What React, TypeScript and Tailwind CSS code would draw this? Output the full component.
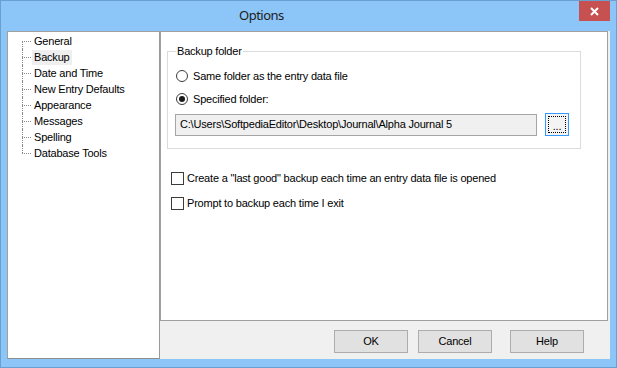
import React from "react";

const font = { fontFamily: '"Liberation Sans", Arial, sans-serif' };

const treeItems = [
  "General",
  "Backup",
  "Date and Time",
  "New Entry Defaults",
  "Appearance",
  "Messages",
  "Spelling",
  "Database Tools",
];

function TreeRow({ label, index, total }: { label: string; index: number; total: number }) {
  const first = index === 0;
  const last = index === total - 1;
  return (
    <div className="flex h-[16px] items-center">
      <div className="relative ml-[14px] h-full w-[9px] shrink-0">
        <div
          className={`absolute left-0 w-0 border-l border-dotted border-[#8a8a8a] ${
            first ? "top-[8px] bottom-0" : last ? "top-0 h-[8px]" : "top-0 bottom-0"
          }`}
        />
        <div className="absolute left-0 top-[8px] h-0 w-[9px] border-t border-dotted border-[#8a8a8a]" />
      </div>
      <span
        className={`ml-[1px] h-[15px] px-[2px] text-[11px] leading-[15px] tracking-[-0.2px] text-black ${
          label === "Backup" ? "bg-[#efefef]" : ""
        }`}
      >
        {label}
      </span>
    </div>
  );
}

function Radio({ checked }: { checked?: boolean }) {
  return (
    <div className="flex h-[12px] w-[12px] shrink-0 items-center justify-center rounded-full border border-[#3c3c3c] bg-white">
      {checked && <div className="h-[6px] w-[6px] rounded-full bg-[#1a1a1a]" />}
    </div>
  );
}

function Check() {
  return <div className="h-[13px] w-[13px] shrink-0 border border-[#3c3c3c] bg-white" />;
}

function Btn({ children, className = "" }: { children: React.ReactNode; className?: string }) {
  return (
    <div
      className={`flex h-[23px] w-[74px] items-center justify-center border border-[#adadad] bg-[#e1e1e1] text-[11px] tracking-[-0.2px] text-black ${className}`}
    >
      {children}
    </div>
  );
}

export default function App() {
  return (
    <div
      className="flex h-[368px] w-[617px] flex-col border border-[#6a9fd2] bg-[#8cc5f7]"
      style={font}
    >
      {/* Title bar */}
      <div className="relative flex h-[30px] shrink-0 items-center pl-[238px]">
        <span
          className="text-[13px] tracking-[-0.5px] text-[#1c1c1c]"
          style={{ fontFamily: '"Noto Sans", "Liberation Sans", sans-serif' }}
        >
          Options
        </span>
        <div className="absolute right-[6px] top-0 flex h-[20px] w-[31px] items-center justify-center bg-[#c75050]">
          <svg width="9" height="9" viewBox="0 0 9 9">
            <path d="M1 1 L8 8 M8 1 L1 8" stroke="white" strokeWidth="2" />
          </svg>
        </div>
      </div>

      {/* Client */}
      <div className="ml-[6px] mr-[6px] flex h-[328px] shrink-0">
        {/* Tree */}
        <div className="h-full w-[153px] shrink-0 border border-[#a0a0a0] border-b-[#8d8d8d] border-r-[#9a9a9a] bg-white pt-[1px]">
          {treeItems.map((t, i) => (
            <TreeRow key={t} label={t} index={i} total={treeItems.length} />
          ))}
        </div>

        {/* Right side */}
        <div className="flex flex-1 flex-col bg-[#f0f0f0]">
          <div className="mr-[2px] flex h-[290px] flex-col border border-[#a0a0a0] bg-white pl-[6px] text-[11px] tracking-[-0.2px] text-black">
            {/* Group box */}
            <div className="relative mt-[19px] flex h-[98px] w-[414px] flex-col border border-[#dcdcdc] pl-[7px]">
              <span className="absolute left-[8px] top-[-8px] bg-white px-[1px] leading-[14px]">
                Backup folder
              </span>
              <div className="mt-[16px] flex h-[16px] items-center gap-[5px] pl-[1px]">
                <Radio />
                <span>Same folder as the entry data file</span>
              </div>
              <div className="mt-[7px] flex h-[16px] items-center gap-[5px] pl-[1px]">
                <Radio checked />
                <span>Specified folder:</span>
              </div>
              <div className="mt-[6px] flex items-center">
                <div className="flex h-[22px] w-[362px] items-center border border-[#a5a5a5] bg-[#f0f0f0] pl-[4px]">
                  C:\Users\SoftpediaEditor\Desktop\Journal\Alpha Journal 5
                </div>
                <div className="ml-[8px] flex h-[23px] w-[24px] items-center justify-center border border-[#3399ff] bg-[#f4f4f4] p-[2px]">
                  <div className="flex h-full w-full items-end justify-center border border-dotted border-black pb-[1px] leading-[10px]">
                    ...
                  </div>
                </div>
              </div>
            </div>

            {/* Checkboxes */}
            <div className="mt-[22px] flex h-[14px] items-center gap-[3px] pl-[4px]">
              <Check />
              <span>Create a "last good" backup each time an entry data file is opened</span>
            </div>
            <div className="mt-[11px] flex h-[14px] items-center gap-[3px] pl-[4px]">
              <Check />
              <span>Prompt to backup each time I exit</span>
            </div>
          </div>

          {/* Buttons */}
          <div className="flex flex-1 items-start justify-end pr-[26px] pt-[9px]">
            <Btn>OK</Btn>
            <Btn className="ml-[10px]">Cancel</Btn>
            <Btn className="ml-[18px]">Help</Btn>
          </div>
        </div>
      </div>
    </div>
  );
}
